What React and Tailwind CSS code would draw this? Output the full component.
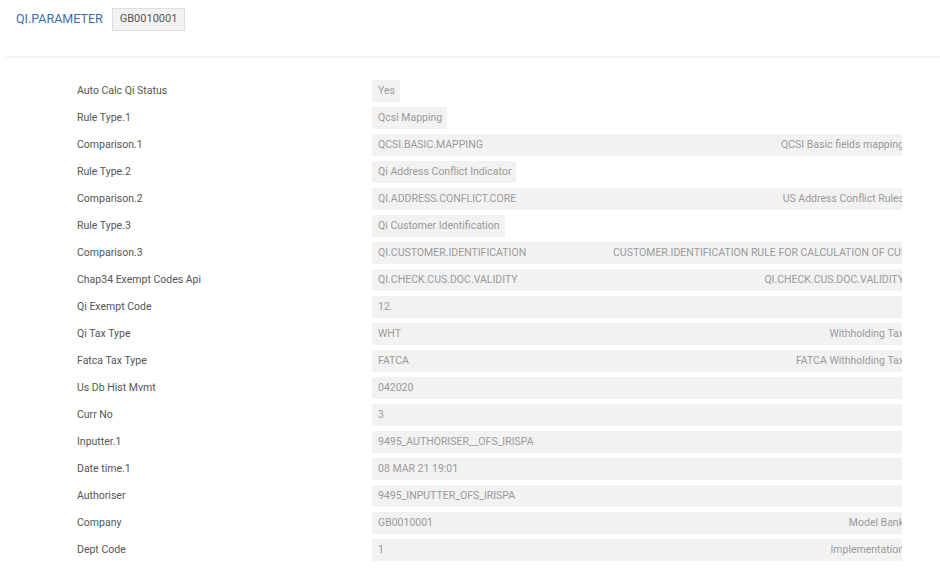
import React from "react";

const rows = [
  { label: "Auto Calc Qi Status", value: "Yes", short: true },
  { label: "Rule Type.1", value: "Qcsi Mapping", short: true },
  { label: "Comparison.1", value: "QCSI.BASIC.MAPPING", right: "QCSI Basic fields mapping" },
  { label: "Rule Type.2", value: "Qi Address Conflict Indicator", short: true },
  { label: "Comparison.2", value: "QI.ADDRESS.CONFLICT.CORE", right: "US Address Conflict Rules" },
  { label: "Rule Type.3", value: "Qi Customer Identification", short: true },
  {
    label: "Comparison.3",
    value: "QI.CUSTOMER.IDENTIFICATION",
    right: "CUSTOMER.IDENTIFICATION RULE FOR CALCULATION OF CUSTOMER",
  },
  { label: "Chap34 Exempt Codes Api", value: "QI.CHECK.CUS.DOC.VALIDITY", right: "QI.CHECK.CUS.DOC.VALIDITY" },
  { label: "Qi Exempt Code", value: "12." },
  { label: "Qi Tax Type", value: "WHT", right: "Withholding Tax" },
  { label: "Fatca Tax Type", value: "FATCA", right: "FATCA Withholding Tax" },
  { label: "Us Db Hist Mvmt", value: "042020" },
  { label: "Curr No", value: "3" },
  { label: "Inputter.1", value: "9495_AUTHORISER__OFS_IRISPA" },
  { label: "Date time.1", value: "08 MAR 21 19:01" },
  { label: "Authoriser", value: "9495_INPUTTER_OFS_IRISPA" },
  { label: "Company", value: "GB0010001", right: "Model Bank" },
  { label: "Dept Code", value: "1", right: "Implementation" },
];

export default function App() {
  return (
    <div
      className="w-[940px] h-[574px] bg-white overflow-hidden"
      style={{ fontFamily: "Roboto, 'Liberation Sans', sans-serif" }}
    >
      <div className="flex items-center pl-[16px] pt-[8px]">
        <span className="text-[12.5px] text-[#3d6ea6] leading-none">QI.PARAMETER</span>
        <span className="ml-[9px] h-[23px] px-[7px] flex items-center border border-[#dedede] bg-[#f2f2f2] text-[11px] text-[#555]">
          GB0010001
        </span>
      </div>
      <div className="mt-[25px] ml-[6px] h-[2px] bg-[#f4f4f4]" />
      <div className="mt-[22px] flex flex-col gap-[5px]">
        {rows.map((r) => (
          <div key={r.label} className="flex items-center h-[22px]">
            <div className="w-[372px] shrink-0 pl-[77px] text-[10.5px] text-[#555] whitespace-nowrap">
              {r.label}
            </div>
            {r.short ? (
              <div className="h-[22px] flex items-center bg-[#f2f2f2] pl-[6px] pr-[5px] text-[10.5px] text-[#9a9a9a] whitespace-nowrap">
                {r.value}
              </div>
            ) : (
              <div className="w-[530px] h-[22px] flex items-center bg-[#f2f2f2] overflow-hidden text-[10.5px] text-[#9a9a9a] whitespace-nowrap">
                <span className="flex-1 pl-[6px]">{r.value}</span>
                {r.right && (
                  <span className="w-[291px] shrink-0 -mr-[2px] text-right overflow-hidden">{r.right}</span>
                )}
              </div>
            )}
          </div>
        ))}
      </div>
    </div>
  );
}
